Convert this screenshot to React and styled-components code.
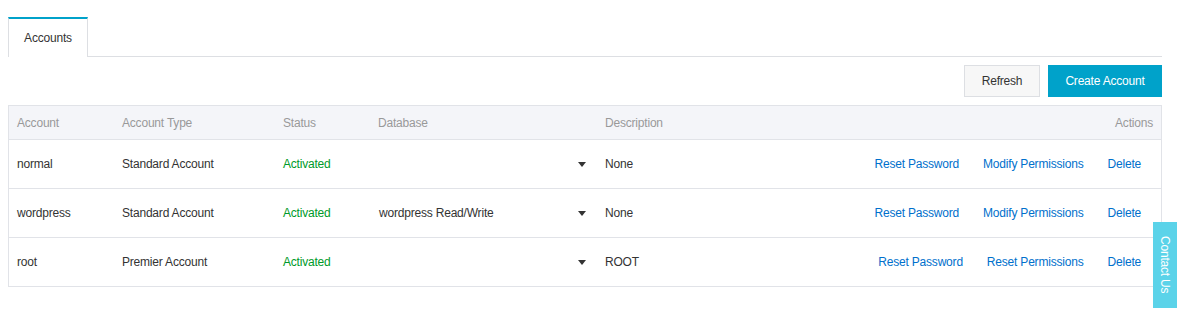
import React from "react";
import styled, { createGlobalStyle } from "styled-components";

const GlobalStyle = createGlobalStyle`
  html, body {
    margin: 0;
    padding: 0;
    background: #fff;
    font-family: "Liberation Sans", Arial, sans-serif;
    font-size: 12px;
    letter-spacing: -0.2px;
    color: #333;
  }
`;

const Page = styled.div`
  width: 1177px;
  height: 322px;
  box-sizing: border-box;
  padding: 17px 15px 0 8px;
  position: relative;
  overflow: hidden;
`;

const TabBar = styled.div`
  display: flex;
  border-bottom: 1px solid #dddfe3;
  height: 39px;
`;

const Tab = styled.div`
  width: 80px;
  box-sizing: border-box;
  border-top: 2px solid #00a2ca;
  border-left: 1px solid #dddfe3;
  border-right: 1px solid #dddfe3;
  background: #fff;
  margin-bottom: -1px;
  display: flex;
  align-items: center;
  justify-content: center;
  color: #333;
`;

const Toolbar = styled.div`
  display: flex;
  justify-content: flex-end;
  gap: 8px;
  margin-top: 8px;
  margin-bottom: 8px;
`;

const Button = styled.button`
  height: 32px;
  box-sizing: border-box;
  padding: 0;
  font-family: inherit;
  font-size: 12px;
  letter-spacing: inherit;
  white-space: nowrap;
  border-radius: 0;
  cursor: pointer;
  border: 1px solid ${(p) => (p.$primary ? "#00a2ca" : "#dddfe3")};
  background: ${(p) => (p.$primary ? "#00a2ca" : "#f7f7f7")};
  color: ${(p) => (p.$primary ? "#fff" : "#333")};
  width: ${(p) => p.$width};
`;

const Table = styled.div`
  border: 1px solid #e1e3e8;
`;

const Row = styled.div`
  display: grid;
  grid-template-columns: 105px 161px 95px 227px 1fr auto;
  align-items: center;
  height: ${(p) => (p.$head ? "33px" : "48px")};
  background: ${(p) => (p.$head ? "#f4f5f9" : "#fff")};
  color: ${(p) => (p.$head ? "#999" : "#333")};
  border-bottom: 1px solid #e1e3e8;
  &:last-child {
    border-bottom: none;
  }
`;

const Cell = styled.div`
  padding-left: 8px;
  color: ${(p) => p.$color || "inherit"};
  white-space: nowrap;
`;

const DbCell = styled.div`
  display: flex;
  align-items: center;
  justify-content: space-between;
  padding: 0 11px 0 9px;
`;

const Caret = styled.span`
  width: 0;
  height: 0;
  border-left: 4.5px solid transparent;
  border-right: 4.5px solid transparent;
  border-top: 5px solid #333;
`;

const Actions = styled.div`
  display: flex;
  justify-content: flex-end;
  gap: 24px;
  padding-right: ${(p) => (p.$head ? "8px" : "20px")};
`;

const Link = styled.a`
  color: #0070cc;
  text-decoration: none;
  cursor: pointer;
`;

const Contact = styled.div`
  position: absolute;
  right: 0;
  top: 222px;
  width: 24px;
  height: 86px;
  background: #5bd3e9;
  color: #fff;
  writing-mode: vertical-rl;
  display: flex;
  align-items: center;
  justify-content: center;
  font-size: 12px;
`;

const rows = [
  { name: "normal", type: "Standard Account", db: "", desc: "None", perm: "Modify Permissions" },
  { name: "wordpress", type: "Standard Account", db: "wordpress Read/Write", desc: "None", perm: "Modify Permissions" },
  { name: "root", type: "Premier Account", db: "", desc: "ROOT", perm: "Reset Permissions" },
];

export default function App() {
  return (
    <Page>
      <GlobalStyle />
      <TabBar>
        <Tab>Accounts</Tab>
      </TabBar>
      <Toolbar>
        <Button $width="76px">Refresh</Button>
        <Button $primary $width="114px">Create Account</Button>
      </Toolbar>
      <Table>
        <Row $head>
          <Cell>Account</Cell>
          <Cell>Account Type</Cell>
          <Cell>Status</Cell>
          <Cell>Database</Cell>
          <Cell>Description</Cell>
          <Actions $head>Actions</Actions>
        </Row>
        {rows.map((r) => (
          <Row key={r.name}>
            <Cell>{r.name}</Cell>
            <Cell>{r.type}</Cell>
            <Cell $color="#009a29">Activated</Cell>
            <DbCell>
              <span>{r.db}</span>
              <Caret />
            </DbCell>
            <Cell>{r.desc}</Cell>
            <Actions>
              <Link>Reset Password</Link>
              <Link>{r.perm}</Link>
              <Link>Delete</Link>
            </Actions>
          </Row>
        ))}
      </Table>
      <Contact>Contact Us</Contact>
    </Page>
  );
}
